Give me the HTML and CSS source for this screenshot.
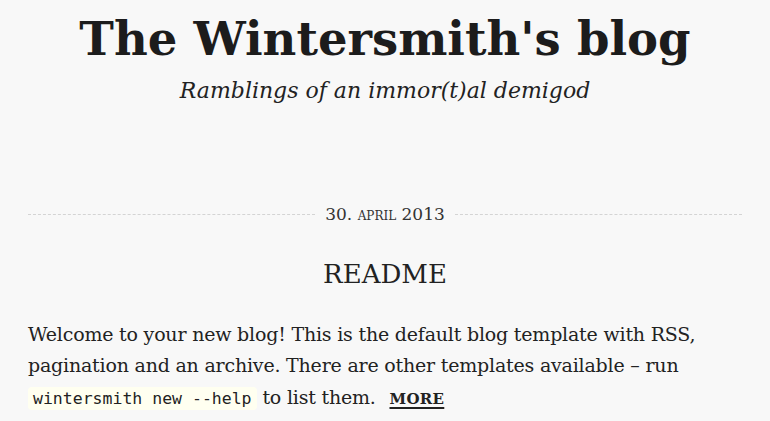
FILE: index.html
```html
<!DOCTYPE html>
<html>
<head>
<meta charset="utf-8">
<link rel="stylesheet" href="styles.css">
</head>
<body>
<header class="header">
  <h1 class="title">The Wintersmith's blog</h1>
  <p class="tagline">Ramblings of an immor(t)al demigod</p>
</header>
<main class="content">
  <article class="article">
    <div class="date"><span>30. april 2013</span></div>
    <h2 class="post-title">README</h2>
    <p class="body">Welcome to your new blog! This is the default blog template with RSS, pagination and an archive. There are other templates available – run <code class="code">wintersmith new --help</code> to list them. <a class="more" href="#">more</a></p>
  </article>
</main>
</body>
</html>
```
FILE: styles.css
```css
html, body {
  margin: 0;
  padding: 0;
  background: #f8f8f8;
  color: #222;
}
body {
  font-family: "DejaVu Serif", serif;
}
.header {
  text-align: center;
  padding-top: 6px;
}
.title {
  font-family: "DejaVu Serif", serif;
  font-weight: bold;
  font-size: 46.5px;
  line-height: 66px;
  margin: 0;
  color: #1c1c1c;
}
.tagline {
  font-family: "DejaVu Serif", serif;
  font-style: italic;
  font-size: 22px;
  line-height: 30px;
  margin: 4px 0 0;
}
.content {
  padding: 0 28px;
}
.article {
  padding-top: 96px;
}
.date {
  display: flex;
  align-items: center;
  gap: 10px;
  font-size: 17px;
  line-height: 24px;
}
.date::before, .date::after {
  content: "";
  flex: 1;
  border-top: 1px dashed #d4d4d4;
}
.date span {
  font-variant: small-caps;
  color: #333;
}
.post-title {
  text-align: center;
  font-weight: normal;
  font-size: 26px;
  line-height: 36px;
  margin: 30px 0 0;
}
.body {
  font-size: 19px;
  letter-spacing: -0.2px;
  line-height: 31px;
  margin: 27px 0 0;
}
.code {
  font-family: "DejaVu Sans Mono", monospace;
  font-size: 16.5px;
  letter-spacing: 0;
  background: #fffff0;
  border-radius: 4px;
  padding: 2px 5px;
}
.more {
  color: #222;
  font-weight: bold;
  font-size: 1.12em;
  letter-spacing: 0.3px;
  font-variant: small-caps;
  text-decoration: underline;
  text-decoration-thickness: 2px;
  text-underline-offset: 3px;
  margin-left: 8px;
}
```
